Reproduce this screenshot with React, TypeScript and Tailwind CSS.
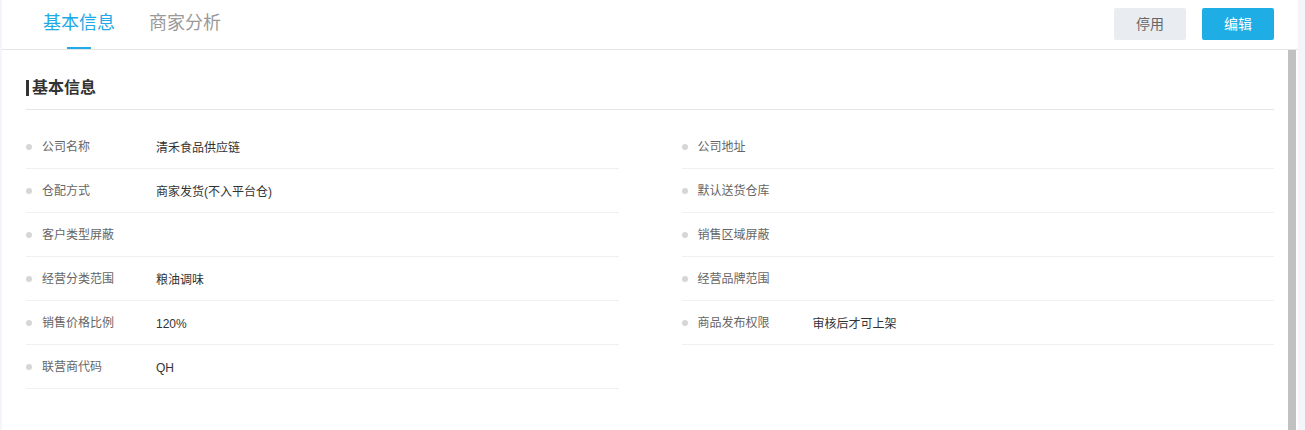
import React, { useState } from "react";

type Field = { label: string; value?: string };

const leftFields: Field[] = [
    { label: "公司名称", value: "清禾食品供应链" },
    { label: "仓配方式", value: "商家发货(不入平台仓)" },
    { label: "客户类型屏蔽" },
    { label: "经营分类范围", value: "粮油调味" },
    { label: "销售价格比例", value: "120%" },
    { label: "联营商代码", value: "QH" },
];

const rightFields: Field[] = [
    { label: "公司地址" },
    { label: "默认送货仓库" },
    { label: "销售区域屏蔽" },
    { label: "经营品牌范围" },
    { label: "商品发布权限", value: "审核后才可上架" },
];

function FieldRow({ field, valueOffset }: { field: Field; valueOffset: string }) {
    return (
        <div className="flex h-[44px] items-center border-b border-[#f0f0f0]">
            <span className="h-[6px] w-[6px] shrink-0 rounded-full bg-[#d6d6d6]" />
            <span className={`ml-[10px] shrink-0 text-[12px] text-[#666] ${valueOffset}`}>
                {field.label}
            </span>
            <span className="pt-[2px] text-[12px] text-[#333]">{field.value}</span>
        </div>
    );
}

export default function App() {
    const [tab, setTab] = useState("info");

    return (
        <div
            className="flex h-screen bg-[#f4f5fa] pl-[2px] pr-[7px]"
            style={{ fontFamily: '"Liberation Sans", "Noto Sans CJK SC", sans-serif' }}
        >
            <div className="flex flex-1 flex-col bg-white">
                <div className="flex h-[50px] shrink-0 items-start justify-between border-b border-[#e5e5e5] pl-[41px] pr-[24px]">
                    <div className="flex h-full gap-[34px]">
                        <button
                            onClick={() => setTab("info")}
                            className={`relative flex h-full items-center pb-[3px] text-[18px] ${
                                tab === "info" ? "text-[#1fa9e6]" : "text-[#999]"
                            }`}
                        >
                            基本信息
                            {tab === "info" && (
                                <span className="absolute bottom-0 left-1/2 h-[2px] w-[24px] -translate-x-1/2 bg-[#1fa9e6]" />
                            )}
                        </button>
                        <button
                            onClick={() => setTab("analysis")}
                            className={`relative flex h-full items-center pb-[3px] text-[18px] ${
                                tab === "analysis" ? "text-[#1fa9e6]" : "text-[#999]"
                            }`}
                        >
                            商家分析
                            {tab === "analysis" && (
                                <span className="absolute bottom-0 left-1/2 h-[2px] w-[24px] -translate-x-1/2 bg-[#1fa9e6]" />
                            )}
                        </button>
                    </div>
                    <div className="mt-[8px] flex gap-[16px]">
                        <button className="h-[32px] w-[72px] rounded-[2px] bg-[#e9ecf0] text-[14px] text-[#666]">
                            停用
                        </button>
                        <button className="h-[32px] w-[72px] rounded-[2px] bg-[#1eade5] text-[14px] text-white">
                            编辑
                        </button>
                    </div>
                </div>

                <div className="flex min-h-0 flex-1">
                    <div className="flex-1 pl-[24px] pr-[14px] pt-[26px]">
                        <div className="flex items-center border-b border-[#e5e5e5] pb-[9px]">
                            <span className="h-[16px] w-[3px] bg-[#333]" />
                            <h2 className="ml-[3px] h-[24px] text-[16px] font-bold leading-[24px] text-[#333]">
                                基本信息
                            </h2>
                        </div>

                        <div className="mt-[15px] grid grid-cols-2 gap-x-[63px]">
                            <div>
                                {leftFields.map((f) => (
                                    <FieldRow key={f.label} field={f} valueOffset="w-[114px]" />
                                ))}
                            </div>
                            <div>
                                {rightFields.map((f) => (
                                    <FieldRow key={f.label} field={f} valueOffset="w-[115px]" />
                                ))}
                            </div>
                        </div>
                    </div>
                    {/* scroll thumb */}
                    <div className="mr-[2px] w-[8px] bg-[#c1c1c1]" />
                </div>
            </div>
        </div>
    );
}
